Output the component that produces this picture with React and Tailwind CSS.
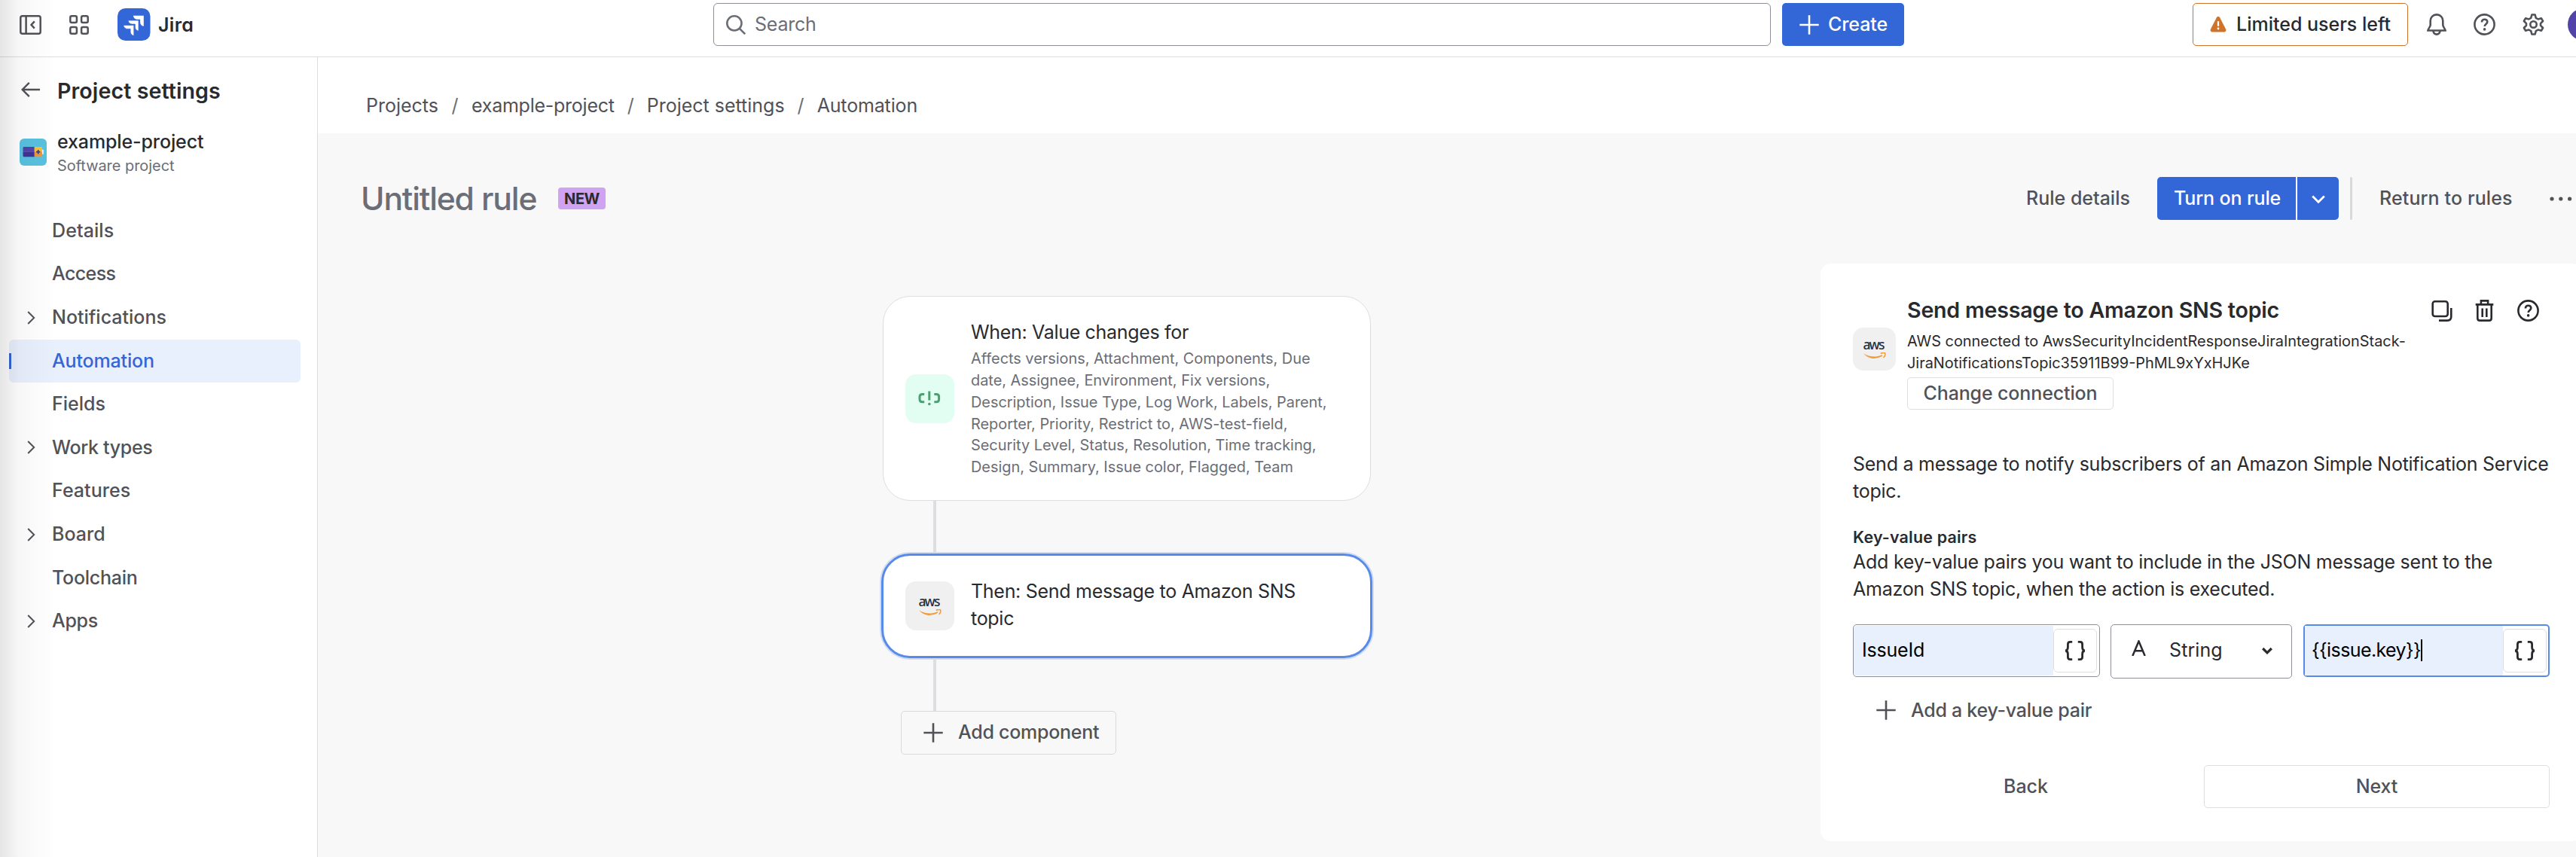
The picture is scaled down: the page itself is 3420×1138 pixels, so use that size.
import React from "react";

const Svg = ({ w, h, children, className = "", sw = 2.6 }) => (
  <svg
    width={w}
    height={h}
    viewBox={`0 0 ${w} ${h}`}
    fill="none"
    stroke="currentColor"
    strokeWidth={sw}
    className={`shrink-0 ${className}`}
  >
    {children}
  </svg>
);

const Plus = ({ className = "" }) => (
  <Svg w={26} h={26} className={className}>
    <path d="M13 0.3v25.4M0.3 13h25.4" />
  </Svg>
);

const Help = ({ className = "" }) => (
  <Svg w={29} h={29} className={className}>
    <circle cx="14.5" cy="14.5" r="13.1" />
    <path d="M10.9 11.4c0-2.2 1.5-3.7 3.7-3.7s3.7 1.4 3.7 3.4c0 2.9-3.6 2.8-3.6 6" />
    <circle cx="14.6" cy="20.9" r="1.8" fill="currentColor" stroke="none" />
  </Svg>
);

const Braces = () => (
  <Svg w={30} h={26} sw={2.8} className="text-[#292a2e]">
    <path d="M11.2 1.4H8.4c-2 0-3 1.1-3 3v4.2c0 2.2-1 4-3.2 4.4c2.2.4 3.2 2.2 3.2 4.4v4.2c0 1.9 1 3 3 3h2.8" />
    <path d="M18.8 1.4h2.8c2 0 3 1.1 3 3v4.2c0 2.2 1 4 3.2 4.4c-2.2.4-3.2 2.2-3.2 4.4v4.2c0 1.9-1 3-3 3h-2.8" />
  </Svg>
);

const AwsTile = ({ className = "" }) => (
  <div className={`flex shrink-0 flex-col items-center justify-center rounded-[14px] bg-[#f0f0f1] ${className}`}>
    <span className="mr-[3px] h-[17px] font-['Noto_Sans'] text-[17.5px] leading-[13px] font-medium tracking-[-1.8px] text-[#252f3e]">
      aws
    </span>
    <svg width="30" height="9" viewBox="0 0 30 9" className="shrink-0">
      <path d="M0.4 1.2C7.5 6.4 17 6.8 24.6 3.2l.7 1.4C17.5 9.6 6.5 9.4 0.4 1.2z" fill="#f29a38" />
      <path d="M22.8 1.5c2-1.2 4.4-1.3 5.9-.6c.4 1.8-.4 4.5-2.1 5.900" fill="none" stroke="#f29a38" strokeWidth="1.5" />
    </svg>
  </div>
);

const NAV = [
  { label: "Details", track: "tracking-[0.09px]" },
  { label: "Access", track: "tracking-[-0.6px]" },
  { label: "Notifications", chevron: true, track: "tracking-[0px]" },
  { label: "Automation", selected: true, track: "tracking-[-0.16px]" },
  { label: "Fields", track: "tracking-[0px]" },
  { label: "Work types", chevron: true, track: "tracking-[-0.32px]" },
  { label: "Features", track: "tracking-[0.05px]" },
  { label: "Board", chevron: true, track: "tracking-[0px]" },
  { label: "Toolchain", track: "tracking-[-0.27px]" },
  { label: "Apps", chevron: true, track: "tracking-[-0.3px]" },
];

const CHANGE_FIELDS = [
  "Affects versions, Attachment, Components, Due",
  "date, Assignee, Environment, Fix versions,",
  "Description, Issue Type, Log Work, Labels, Parent,",
  "Reporter, Priority, Restrict to, AWS-test-field,",
  "Security Level, Status, Resolution, Time tracking,",
  "Design, Summary, Issue color, Flagged, Team",
];

function Header() {
  return (
    <header className="flex h-[76px] shrink-0 items-center border-b border-[#dddee1] pb-[10px] text-[#505258]">
      <div className="flex w-[947px] shrink-0 items-center pl-[26px]">
        <Svg w={29} h={26} sw={2.5}>
          <rect x="1.3" y="1.3" width="26.4" height="23.4" rx="2.5" />
          <path d="M8.6 1.5v23M19.8 8.4L15.6 13l4.2 4.6" />
        </Svg>
        <Svg w={26} h={26} sw={2.5} className="ml-[37px]">
          <rect x="1.3" y="1.3" width="8.6" height="8.6" rx="2" />
          <rect x="16.1" y="1.3" width="8.6" height="8.6" rx="2" />
          <rect x="1.3" y="16.1" width="8.6" height="8.6" rx="2" />
          <rect x="16.1" y="16.1" width="8.6" height="8.6" rx="2" />
        </Svg>
        <svg width="44" height="43" viewBox="0 0 44 43" className="ml-[38px] shrink-0">
          <rect width="43.5" height="43" rx="10.5" fill="#3366d6" />
          <g fill="#fff">
            <path d="M20.8 9.7h14v14.1c-3-.5-4.7-2.6-4.7-5.4v-3.700h-3.7c-2.9 0-5-1.800-5.6-5z" />
            <path d="M14 16.1h14v14.1c-3-.5-4.7-2.6-4.7-5.4v-3.700h-3.7c-2.9 0-5-1.800-5.6-5z" stroke="#3366d6" strokeWidth="0.7" />
            <path d="M7.8 22.4h14v14.1c-3-.5-4.7-2.6-4.7-5.4v-3.700h-3.7c-2.9 0-5-1.800-5.6-5z" stroke="#3366d6" strokeWidth="0.7" />
          </g>
        </svg>
        <span className="ml-[10px] text-[25px] leading-[36px] font-semibold tracking-[0.3px] text-[#292a2e] [font-feature-settings:'cv11']">
          Jira
        </span>
      </div>
      <div className="flex h-[57px] w-[1404px] shrink-0 items-center rounded-[6px] border border-[#8c8f97] pl-[16px] text-[#6b6e76]">
        <Svg w={26} h={26}>
          <circle cx="10.9" cy="10.9" r="9.6" />
          <path d="M17.8 17.8l7.4 7.4" />
        </Svg>
        <span className="ml-[12px] text-[25px] tracking-[-0.24px]">Search</span>
      </div>
      <button className="ml-[15px] flex h-[57px] w-[162px] shrink-0 items-center rounded-[5px] bg-[#3366d6] pl-[23px] text-[25px] font-medium text-white">
        <Plus />
        <span className="ml-[12px] tracking-[-0.08px]">Create</span>
      </button>
      <div className="ml-[383px] flex h-[57px] w-[286px] shrink-0 items-center rounded-[5px] border border-[#d0732a] pl-[22px]">
        <svg width="22" height="21" viewBox="0 0 22 21" className="shrink-0">
          <path d="M8.9 1.3c.9-1.6 3.3-1.6 4.2 0l8 15.5c.8 1.7-.2 3.7-2.1 3.7H3c-1.9 0-2.9-2-2.1-3.7z" fill="#d0732a" />
          <path d="M11 6.2v6.6" stroke="#fff" strokeWidth="2.2" />
          <circle cx="11" cy="16" r="1.4" fill="#fff" />
        </svg>
        <span className="ml-[13px] text-[25px] font-medium whitespace-nowrap text-[#292a2e]">Limited users left</span>
      </div>
      <Svg w={26} h={29} className="ml-[25px]">
        <path d="M13 1.4c-5 0-8.3 3.6-8.3 8.3v5.6c0 2.6-3.3 5.2-3.3 7.2h23.2c0-2-3.3-4.6-3.3-7.2V9.7c0-4.7-3.3-8.3-8.3-8.3zM8.5 23.5c.5 2.5 2.2 4.1 4.5 4.1s4-1.6 4.5-4.1" />
      </Svg>
      <Help className="ml-[36px]" />
      <Svg w={29} h={29} className="ml-[36px]" sw={2.6}>
        <path
          strokeLinejoin="round"
          d="M12.4 1.5h4.2l1.2 4.300l2.900 1.700l4.300-1.200l2.100 3.700l-3.100 3.200v2.600l3.100 3.200l-2.100 3.700l-4.300-1.200l-2.900 1.700l-1.200 4.300h-4.200l-1.200-4.300l-2.900-1.700l-4.300 1.200l-2.100-3.700l3.100-3.200v-2.600l-3.100-3.200l2.100-3.700l4.300 1.200l2.900-1.700z"
        />
        <circle cx="14.5" cy="14.5" r="4.2" />
      </Svg>
      <div className="ml-[31px] h-[43px] w-[43px] shrink-0 rounded-full bg-[#5243aa]" />
    </header>
  );
}

function Sidebar() {
  return (
    <aside className="flex w-[422px] shrink-0 flex-col border-r border-[#dddee1] text-[25px] font-medium text-[#505258]">
      <div className="mt-[24px] flex h-[40px] items-center pl-[28px]">
        <Svg w={26} h={20} sw={2.4} className="-mt-0.5">
          <path d="M1.5 10H25M10.8 0.9L1.7 10l9.1 9.1" />
        </Svg>
        <span className="mt-[2px] ml-[22px] text-[28.6px] font-semibold tracking-[0.09px] text-[#292a2e]">
          Project settings
        </span>
      </div>
      <div className="mt-[30px] flex items-center pl-[26px]">
        <svg width="36" height="36" viewBox="0 0 36 36" className="mt-[-1px] shrink-0">
          <rect width="36" height="36" rx="6" fill="#59c1df" />
          <path d="M6 11h14v6.7H4.5v-5.2c0-.8.7-1.5 1.5-1.5z" fill="#5243aa" />
          <path d="M4.5 17.7H20v6.5H6c-.8 0-1.5-.7-1.5-1.5z" fill="#403294" />
          <path d="M19.6 11h9c.8 0 1.5.7 1.5 1.5v5.2H19.6z" fill="#f5c042" />
          <path d="M19.6 17.7h10.5v5c0 .8-.7 1.5-1.5 1.5h-9z" fill="#ea983a" />
          <path d="M24.7 15v5.4M22 17.7h5.4" stroke="#403294" strokeWidth="1.7" />
          <path d="M30.1 14.7h1.6v6h-1.6z" fill="#fff" />
        </svg>
        <div className="ml-[14px]">
          <div className="leading-[36px] tracking-[-0.12px] text-[#292a2e]">example-project</div>
          <div className="text-[19.9px] leading-[28px] font-normal text-[#6b6e76]">Software project</div>
        </div>
      </div>
      <nav className="mt-[44px] flex flex-col">
        {NAV.map((n) => (
          <div key={n.label} className="h-[57.6px] pl-[12px]">
            <div
              className={`flex h-[57px] w-[387px] items-center rounded-[6px] ${
                n.selected ? "bg-[#e9f0fd] text-[#3366d6]" : ""
              }`}
            >
              <div className="flex w-[57px] items-center">
                {n.selected && <span className="h-[21px] w-[3px] bg-[#3366d6]" />}
                {n.chevron && (
                  <Svg w={12} h={18} sw={2} className="ml-[24px]">
                    <path d="M1.2 1l8 8l-8 8" />
                  </Svg>
                )}
              </div>
              <span className={n.track}>{n.label}</span>
            </div>
          </div>
        ))}
      </nav>
    </aside>
  );
}

function Toolbar() {
  return (
    <div className="flex h-[57px] items-center text-[25px] font-medium whitespace-nowrap text-[#505258]">
      <h1 className="ml-[57px] w-[262px] text-[42.6px] tracking-[-1.15px] text-[#6b6e76]">Untitled rule</h1>
      <span className="flex h-[29px] w-[63px] items-center justify-center rounded-[4px] bg-[#cfa3f2] text-[20px] font-bold tracking-[-0.45px] text-[#292a2e]">
        NEW
      </span>
      <span className="ml-[1886px] w-[174px]">Rule details</span>
      <button className="flex h-[57px] w-[184px] items-center rounded-l-[5px] bg-[#3366d6] pl-[22px] tracking-[-0.13px] text-white">
        Turn on rule
      </button>
      <button className="ml-[2px] flex h-[57px] w-[55px] items-center justify-center rounded-r-[5px] bg-[#3366d6] text-white">
        <Svg w={18} h={12} sw={2.8} className="mt-[3px]">
          <path d="M1.2 1.4L9 9.2l7.8-7.8" />
        </Svg>
      </button>
      <span className="ml-[15px] h-[57px] w-[3px] rounded-full bg-[#d8d9db]" />
      <span className="ml-[36px] w-[226px] tracking-[0.11px]">Return to rules</span>
      <Svg w={32} h={6}>
        <g fill="currentColor" stroke="none">
          <circle cx="3" cy="3" r="2.6" />
          <circle cx="14.8" cy="3" r="2.6" />
          <circle cx="26.6" cy="3" r="2.6" />
        </g>
      </Svg>
    </div>
  );
}

function Flow() {
  return (
    <div className="flex w-[1247px] shrink-0 flex-col items-start pt-[101px] text-[25px] text-[#292a2e]">
      <div className="ml-[2px] flex h-[272px] w-[648px] items-center rounded-[36px] border border-[#dddee1] bg-white pl-[29px]">
        <div className="flex h-[65px] w-[65px] shrink-0 items-center justify-center rounded-[14px] bg-[#e2fef2] text-[#4ca070]">
          <Svg w={30} h={20} sw={3} className="mr-px">
            <path d="M8.2 4.5H5.5c-2.2 0-3.5 1.3-3.5 3.5v3.3c0 2.2 1.3 3.5 3.5 3.5h2.7M21.3 4.5h2.8c2.2 0 3.5 1.3 3.5 3.5v3.3c0 2.2-1.3 3.5-3.5 3.5h-2.8M14.8 0.5v12" />
            <circle cx="14.8" cy="17.5" r="1.8" fill="currentColor" stroke="none" />
          </Svg>
        </div>
        <div className="ml-[22px] whitespace-nowrap">
          <div className="leading-[36px] tracking-[-0.32px]">When: Value changes for</div>
          <div className="mt-[3px] text-[19.9px] leading-[28.8px] tracking-[-0.01px] text-[#6b6e76]">
            {CHANGE_FIELDS.map((l) => (
              <div key={l}>{l}</div>
            ))}
          </div>
        </div>
      </div>
      <div className="ml-[69px] h-[70px] w-[4px] bg-[#dddee1]" />
      <div className="flex h-[139px] w-[652px] items-center rounded-[38px] border-[3px] border-[#588ae8] bg-white pl-[29px] shadow-[0_0_0_2px_#cfdcf5]">
        <AwsTile className="h-[65px] w-[65px]" />
        <div className="mt-[-4px] ml-[22px] leading-[36px] tracking-[-0.29px] whitespace-nowrap">
          Then: Send message to Amazon SNS
          <br />
          topic
        </div>
      </div>
      <div className="ml-[69px] h-[70px] w-[4px] bg-[#dddee1]" />
      <button className="ml-[26px] flex h-[58px] w-[286px] items-center rounded-[5px] border border-[#d8d9dc] pl-[29px] font-medium text-[#505258]">
        <Plus />
        <span className="ml-[20px] tracking-[-0.27px]">Add component</span>
      </button>
    </div>
  );
}

const BraceButton = () => (
  <div className="flex h-[58px] w-[58px] shrink-0 items-center justify-center rounded-[6px] border border-[#dddee1] bg-white">
    <Braces />
  </div>
);

function Panel() {
  return (
    <section className="h-[767px] w-[1011px] shrink-0 rounded-[14px] bg-white pt-[44px] pl-[43px] text-[25px] text-[#292a2e]">
      <div className="w-[925px]">
        <div className="flex">
          <AwsTile className="mt-[41px] h-[57px] w-[57px]" />
          <div className="ml-[15px] flex-1 whitespace-nowrap">
            <div className="flex h-[36px] items-center">
              <h2 className="flex-1 text-[28.6px] font-semibold tracking-[-0.22px]">Send message to Amazon SNS topic</h2>
              <Svg w={29} h={29}>
                <rect x="1.7" y="2.3" width="20" height="19.7" rx="3" />
                <path d="M26.3 11v11.6c0 3.1-1.9 5-5 5H10" />
              </Svg>
              <Svg w={29} h={29} className="ml-[27px]">
                <path d="M2.7 6.4h23.6M5.3 6.4v18c0 2 1.1 3.2 3.1 3.2h12.2c2 0 3.1-1.2 3.1-3.2v-18M9.9 6V1.4h9.2V6M11.7 11.5v11.5M17.3 11.5v11.5" />
              </Svg>
              <Help className="mr-[14px] ml-[29px]" />
            </div>
            <div className="mt-[8.8px] text-[19.9px] leading-[28.8px]">
              <div>AWS connected to AwsSecurityIncidentResponseJiraIntegrationStack-</div>
              <div>JiraNotificationsTopic35911B99-PhML9xYxHJKe</div>
            </div>
            <button className="mt-[4.6px] flex h-[43px] w-[274px] items-center justify-center rounded-[5px] border border-[#dddee1] font-medium tracking-[-0.13px] text-[#505258]">
              Change connection
            </button>
          </div>
        </div>
        <p className="mt-[54px] leading-[36px] tracking-[-0.25px] whitespace-nowrap">
          Send a message to notify subscribers of an Amazon Simple Notification Service
          <br />
          topic.
        </p>
        <div className="mt-[29px] text-[21.4px] leading-[29px] font-semibold tracking-[0.22px]">Key-value pairs</div>
        <p className="leading-[36px] tracking-[-0.25px] whitespace-nowrap">
          Add key-value pairs you want to include in the JSON message sent to the
          <br />
          Amazon SNS topic, when the action is executed.
        </p>
        <div className="mt-[29px] flex h-[72px] items-start">
          <div className="flex h-[70px] w-[328px] items-center rounded-[5px] border border-[#8c8f97] text-black">
            <div className="flex h-[66px] flex-1 items-center rounded-l-[4px] bg-[#e8effd] pl-[11px] tracking-[-0.2px]">IssueId</div>
            <BraceButton />
            <span className="w-[3px]" />
          </div>
          <div className="ml-[14px] flex h-[72px] w-[241px] items-center rounded-[5px] border border-[#8c8f97] pl-[27px]">
            <Svg w={19} h={21} sw={2.5} className="mt-[-9px]">
              <path d="M1.3 21L9.5 1.5L17.7 21M4.3 14.3h10.4" />
            </Svg>
            <span className="mt-[-2px] ml-[31px] flex-1 tracking-[0.09px]">String</span>
            <Svg w={14} h={11} sw={3.2} className="mr-[25px]">
              <path d="M1.2 2L7 7.8L12.8 2" />
            </Svg>
          </div>
          <div className="ml-[15px] flex h-[70px] w-[327px] items-center rounded-[5px] border-2 border-[#588ae8] text-black">
            <div className="flex h-[66px] flex-1 items-center bg-[#e8effd] pl-[9px] tracking-[-0.6px]">
              {"{{issue.key}}"}
              <span className="h-[29px] w-[2px] bg-black" />
            </div>
            <BraceButton />
            <span className="w-[2px]" />
          </div>
        </div>
        <button className="mt-[14px] flex h-[57px] items-center pl-[31px] font-medium text-[#505258]">
          <Plus />
          <span className="ml-[20px] tracking-[-0.27px]">Add a key-value pair</span>
        </button>
        <div className="mt-[44px] flex justify-between font-medium text-[#505258]">
          <button className="flex h-[57px] w-[459px] items-center justify-center">Back</button>
          <button className="flex h-[57px] w-[459px] items-center justify-center rounded-[5px] border border-[#dddee1] tracking-[-0.14px]">
            Next
          </button>
        </div>
      </div>
    </section>
  );
}

export default function App() {
  return (
    <div className="relative flex h-[1138px] w-[3420px] flex-col overflow-hidden bg-white font-['Inter',sans-serif]">
      <Header />
      <div className="flex min-h-0 flex-1">
        <Sidebar />
        <main className="flex min-w-0 flex-1 flex-col overflow-hidden">
          <div className="flex h-[101px] shrink-0 items-center pt-[29px] pl-[64px] text-[25px] whitespace-nowrap text-[#505258]">
            <span>Projects</span>
            <span className="w-[44px] text-center text-[#6b6e76]">/</span>
            <span className="tracking-[-0.25px]">example-project</span>
            <span className="w-[43px] text-center text-[#6b6e76]">/</span>
            <span>Project settings</span>
            <span className="w-[43px] text-center text-[#6b6e76]">/</span>
            <span className="tracking-[-0.15px]">Automation</span>
          </div>
          <div className="min-h-0 flex-1 bg-[#f8f8f8] pt-[58px]">
            <Toolbar />
            <div className="flex items-start">
              <div className="flex w-[1995px] shrink-0 pl-[748px]">
                <Flow />
              </div>
              <div className="pt-[58px]">
                <Panel />
              </div>
            </div>
          </div>
        </main>
      </div>
      <div className="pointer-events-none absolute inset-y-0 left-0 w-[76px] bg-linear-to-r from-black/10 via-black/3 via-35% to-transparent" />
    </div>
  );
}
